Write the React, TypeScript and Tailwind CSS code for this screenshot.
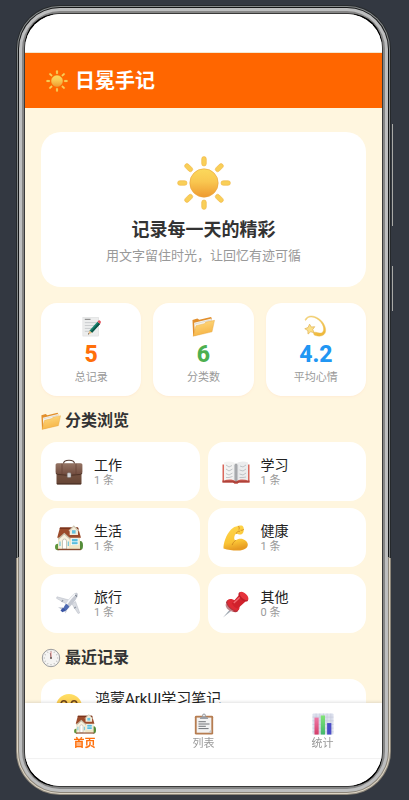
import type { ReactNode } from "react";

type IconProps = { className?: string };

function SunIcon({ className }: IconProps) {
  return (
    <svg viewBox="0 0 54 54" className={className} aria-hidden="true">
      <defs>
        <linearGradient id="sun-core" x1="0" y1="0" x2="0" y2="1">
          <stop offset="0" stopColor="#fbd95c" />
          <stop offset="0.45" stopColor="#f9c750" />
          <stop offset="1" stopColor="#ee9a30" />
        </linearGradient>
      </defs>
      {[0, 45, 90, 135, 180, 225, 270, 315].map((deg) => (
        <rect
          key={deg}
          x="24.7"
          y="0.6"
          width="4.6"
          height="9.4"
          rx="2.3"
          fill="#f9cf58"
          stroke="#f0b545"
          strokeWidth="0.6"
          transform={`rotate(${deg} 27 27)`}
        />
      ))}
      <circle cx="27" cy="27" r="14.2" fill="url(#sun-core)" stroke="#e9a23a" strokeWidth="0.6" />
    </svg>
  );
}

function MemoIcon({ className }: IconProps) {
  return (
    <svg viewBox="0 0 24 24" className={className} aria-hidden="true">
      <rect x="3" y="2.5" width="16.5" height="19.5" fill="#eceded" stroke="#d6d7d8" strokeWidth="0.5" />
      <path d="M5 4.5h6" stroke="#777" strokeWidth="1" />
      <path d="M5 8h12M5 11h12M5 14h9M5 17h6" stroke="#bfc2c4" strokeWidth="0.8" />
      <path d="M18.2 7 21 9.4 12.6 18.6 9.8 16.4Z" fill="#17806c" />
      <path d="M19.6 8.2 21 9.4 12.6 18.6 11.2 17.5Z" fill="#0d5548" />
      <path d="m18.2 7 1.2-1.3c1.1-.6 2.7.8 2.3 2L21 9.4Z" fill="#e0525c" />
      <path d="m9.8 16.4 2.8 2.2-4.2 1.7Z" fill="#e9bd86" />
      <path d="m8.8 19 .9.8-1.4.6Z" fill="#222" />
    </svg>
  );
}

function FolderIcon({ className }: IconProps) {
  return (
    <svg viewBox="0 0 24 24" className={className} aria-hidden="true">
      <defs>
        <linearGradient id="folder-front" x1="0" y1="0" x2="0.3" y2="1">
          <stop offset="0" stopColor="#ffdc83" />
          <stop offset="1" stopColor="#f6b547" />
        </linearGradient>
      </defs>
      <path d="M0.5 5.2 5.6 3.6l2 1.4 12.2-3 .9 1.5L20 17 1.2 22Z" fill="#e28f2c" />
      <path d="M2.2 8 20.4 3.6 21.4 11 3 19Z" fill="#f7f4ec" />
      <path d="m2.6 9.5 18-4.6" stroke="#d2cec6" strokeWidth="0.7" />
      <path d="M4.2 11.2 13 9l1.4-1.6 9.1-1.8-2.6 12L1.2 22.2Z" fill="url(#folder-front)" stroke="#e5a23b" strokeWidth="0.4" />
    </svg>
  );
}

function DizzyIcon({ className }: IconProps) {
  return (
    <svg viewBox="0 0 24 24" className={className} aria-hidden="true">
      <defs>
        <linearGradient id="dizzy-trail" x1="0" y1="0" x2="0.5" y2="1">
          <stop offset="0" stopColor="#f9dc86" />
          <stop offset="1" stopColor="#efb93c" />
        </linearGradient>
      </defs>
      <path
        d="M1.2 4.8C2.5 1.6 6.6.2 11 1.6c6.6 2 11.8 8.6 11.6 14.6-.2 5-4.8 7-10.6 5.2-1.4-.4-2.3-1.4-2-2.4.3-1 1.5-1.3 2.8-.9 4.6 1.5 7.2.7 7.6-2.5.6-4.8-3.6-10.6-9.2-12.8C7.2 1.3 3.6 2 2.3 5.2c-.4.8-1.4.4-1.1-.4Z"
        fill="url(#dizzy-trail)"
        stroke="#e8bd55"
        strokeWidth="0.4"
      />
      <path
        d="m5.8 9.6 1.9 3 3.5-.4-2.1 2.9 1.5 3.4-3.6-1-2.8 2.4-.2-3.600L.8 14.3l3.4-1.2Z"
        fill="#fbe08a"
        stroke="#dfae4c"
        strokeWidth="0.7"
        strokeLinejoin="round"
      />
    </svg>
  );
}

function BriefcaseIcon({ className }: IconProps) {
  return (
    <svg viewBox="0 0 28 28" className={className} aria-hidden="true">
      <defs>
        <linearGradient id="case-top" x1="0" y1="0" x2="0" y2="1">
          <stop offset="0" stopColor="#947363" />
          <stop offset="1" stopColor="#6f4a3c" />
        </linearGradient>
        <linearGradient id="case-body" x1="0" y1="0" x2="0" y2="1">
          <stop offset="0" stopColor="#805c4c" />
          <stop offset="1" stopColor="#664534" />
        </linearGradient>
      </defs>
      <path d="M8.5 5.8C8.5 3 10 2.200 14 2.200s5.5.8 5.5 3.6" fill="none" stroke="#5a4238" strokeWidth="1.1" />
      <rect x="1.5" y="5.5" width="25" height="21" rx="1.2" fill="url(#case-body)" />
      <path d="M.6 7c0-1 .5-1.5 1.4-1.5h24c.9 0 1.4.5 1.4 1.5v7c0 1.5-1 2.3-2.5 2.5L14 17.3 3.1 16.5C1.6 16.3.6 15.5.6 14Z" fill="url(#case-top)" />
      <path d="M1 15c.4 1 1.2 1.4 2.2 1.500L14 17.4l10.800-.9c1-.1 1.800-.5 2.200-1.5" fill="none" stroke="#422a20" strokeWidth="0.8" />
      <path d="M7 5.8v10.5M21 5.8v10.5" stroke="#674539" strokeWidth="0.8" />
      <path d="M2 25.8h24" stroke="#493026" strokeWidth="1" />
      <rect x="12.2" y="14.8" width="3.8" height="4.8" rx="1" fill="#d4d5d8" stroke="#77706d" strokeWidth="0.5" />
    </svg>
  );
}

function BookIcon({ className }: IconProps) {
  return (
    <svg viewBox="0 0 28 28" className={className} aria-hidden="true">
      <path d="M.5 6.500h27v18H17l-1.500 1h-3l-1.500-1H.5Z" fill="#d9685c" />
      <path d="M.5 22.500h27v2H17l-1.500 1h-3l-1.500-1H.5Z" fill="#ae423a" />
      <path d="M2 4.500C6 2.800 11 3.200 14 5.800v17.500c-3-2-8-2.200-12-.8Z" fill="#f3f3f2" />
      <path d="M26 4.500c-4-1.700-9-1.300-12 1.300v17.500c3-2 8-2.200 12-.8Z" fill="#ebeced" />
      <path d="M14 5.800v17.700" stroke="#7c7e81" strokeWidth="1.300" />
      <path d="M12.500 6.500v15.500M15.500 6.500v15.500" stroke="#c4c6c9" strokeWidth="1.200" />
      <path
        d="m4 7 3 2 3-1.500M4 11l3 2 3.500-2M4 15.500l3 1.500 3.500-2M4 19.500l3 0 3.500-1M18 8l3 1 3-2M17.500 12l3.500 1 3-2M17.500 16l3.500 1 3-2M17.500 19.500h3.500l3-.5"
        fill="none"
        stroke="#b4b8bb"
        strokeWidth="0.800"
      />
    </svg>
  );
}

function HouseIcon({ className }: IconProps) {
  return (
    <svg viewBox="0 0 28 28" className={className} aria-hidden="true">
      <ellipse cx="3" cy="23" rx="3" ry="3.2" fill="#5f963d" />
      <ellipse cx="25.3" cy="21.5" rx="2.7" ry="4.5" fill="#548c39" />
      <path d="M3 13h22v12.5H3Z" fill="#efe6c8" />
      <path d="M5 3.5h18l3 10.200H2.200Z" fill="#9b4b2b" />
      <path d="M5 3.500h18l.5 1.500H4.600Z" fill="#7a341d" />
      <path d="M14.700 6.500 18.800 2l4.200 4.500V11h-8.300Z" fill="#f3edda" />
      <path d="M14 7 18.800 2l4.800 5" fill="none" stroke="#d1c9b5" strokeWidth="1.1" />
      <rect x="17" y="6.2" width="3.6" height="3.4" fill="#65c3df" />
      <path d="M4.500 14.500 9.300 10l5 4.500v11H4.500Z" fill="#f7f1de" />
      <path d="M3.200 15.200 9.300 9.600l6 5.600" fill="none" stroke="#c9c2ae" strokeWidth="1.3" />
      <path d="M7.500 25v-8a2 2 0 0 1 4 0v8Z" fill="#fff" stroke="#b2ad9e" strokeWidth="0.7" />
      <path d="M5 17.500v4.500M13.300 17.500v4.500" stroke="#65c3df" strokeWidth="1.1" />
      <rect x="16.5" y="14.7" width="6.5" height="6" fill="#58bddd" stroke="#fff" strokeWidth="0.7" />
      <path d="M16.500 17.700h6.500" stroke="#fff" strokeWidth="0.7" />
      <path d="M2.500 25.500h23.300" stroke="#87482f" strokeWidth="1.4" />
    </svg>
  );
}

function MuscleIcon({ className }: IconProps) {
  return (
    <svg viewBox="0 0 28 28" className={className} aria-hidden="true">
      <defs>
        <linearGradient id="arm" x1="0" y1="0" x2="0.2" y2="1">
          <stop offset="0" stopColor="#ffd64c" />
          <stop offset="0.7" stopColor="#fac536" />
          <stop offset="1" stopColor="#e79b22" />
        </linearGradient>
      </defs>
      <path
        d="M1.500 24.500C1.200 19.500 4 11 9 5.500c2-2.200 4.500-3.200 7-3.600 2.500-.6 4.600-.8 5.200.9.8 1.500.9 4-.1 6-.7 1.500-2.300 2-4 1.600-1.200-.2-2-1-2.700-1-1.400.5-2 2.600-2.200 4.600 0 1.200.5 2.200 1.300 2.500 2-1.600 5-2.200 7.600-1.300 3 .9 4.700 3.100 4.700 5.400 0 3.500-3.600 6-9.600 6-5 .1-10-.5-14.700-2.100Z"
        fill="url(#arm)"
      />
      <path d="M13.500 16.500c-1.700 1.200-2.700 2.600-3.200 4.200M14.400 9.400c.5-1.800 1.900-2.600 3.200-2.200M16.500 2.200c.8 1 .9 2 .6 3M19 6.300c1.200.2 2-.2 2.600-.9" fill="none" stroke="#cf8920" strokeWidth="0.9" strokeLinecap="round" />
    </svg>
  );
}

function PlaneIcon({ className }: IconProps) {
  return (
    <svg viewBox="0 0 28 28" className={className} aria-hidden="true">
      <path d="M14 10 2 6.800 1.500 8.300l10 5.700ZM17 14l6 9.500 1.700-.6L20.500 11.500Z" fill="#d9dce2" stroke="#b4b9c3" strokeWidth="0.5" />
      <path d="m8 17.500-5-.3 3.500 2.300ZM10.500 20 10 23.500l1.800-2.500Z" fill="#bfc4ce" />
      <path d="M21.700 2.800c1.200.6 1.500 2 .6 4-1.800 4-6 9-10.800 13.500-2.300 1.800-4 1.300-3.600-.7C9.700 14.500 16 6 19.300 3.500c1-.8 1.700-1 2.400-.7Z" fill="#c5c9d2" />
      <path d="M20.500 4c-3 1.800-7.500 8-10.300 12" fill="none" stroke="#f6f7f9" strokeWidth="1.6" />
      <path d="M11 13.800c1.300.6 2.500 1.700 3.300 3l-2.800 3.500c-2.300 1.800-4 1.300-3.600-.7.6-1.800 1.700-3.800 3.100-5.800Z" fill="#4f6bb2" />
      <path d="m8 17.500-2.500 3 2 1.800 3-2Z" fill="#3a55a3" />
      <path d="m20.200 5 1.900 1.500" stroke="#56606f" strokeWidth="1" />
      <path d="m8 10-1.300 1.800M21 17l-2 1.300" stroke="#9098a5" strokeWidth="1.2" />
    </svg>
  );
}

function PinIcon({ className }: IconProps) {
  return (
    <svg viewBox="0 0 28 28" className={className} aria-hidden="true">
      <path d="m10 17 2 1.800L1 27.500Z" fill="#a1aab3" />
      <ellipse cx="10.300" cy="16" rx="7.600" ry="4.600" transform="rotate(43 10.300 16)" fill="#b2323b" />
      <ellipse cx="11.500" cy="14.800" rx="7.400" ry="4.200" transform="rotate(43 11.500 14.800)" fill="#de2a34" />
      <path d="M9.800 13.200 17 5l6.800 6.300-8 7.100c-2.300-.3-5-2.600-6-5.200Z" fill="#d0222c" />
      <path d="m11.800 13 6.600-6.200" stroke="#f26a70" strokeWidth="1.400" />
      <ellipse cx="21.300" cy="6.800" rx="6" ry="3.200" transform="rotate(43 21.300 6.800)" fill="#bd1c27" />
      <ellipse cx="22" cy="6" rx="5.500" ry="2.700" transform="rotate(43 22 6)" fill="#e5333c" />
      <path d="M4.200 12.500c1 3.700 3.800 6.800 7.500 8.500l-1.200.6C6.700 21 3.900 18.300 3.600 15Z" fill="#c2868c" />
    </svg>
  );
}

function ClockIcon({ className }: IconProps) {
  return (
    <svg viewBox="0 0 20 20" className={className} aria-hidden="true">
      <circle cx="10" cy="10" r="8.700" fill="#f5f4f2" stroke="#9b9c9e" strokeWidth="1" />
      {[0, 30, 60, 90, 120, 150, 180, 210, 240, 270, 300, 330].map((deg) => (
        <path key={deg} d="M10 2.700v1.200" stroke="#888" strokeWidth="0.6" transform={`rotate(${deg} 10 10)`} />
      ))}
      <path d="M10 10 9.300 5" stroke="#666" strokeWidth="0.8" />
      <path d="M10 11V3.500" stroke="#db5959" strokeWidth="0.7" />
      <circle cx="10" cy="10" r="0.9" fill="#555" />
    </svg>
  );
}

function SmileIcon({ className }: IconProps) {
  return (
    <svg viewBox="0 0 28 28" className={className} aria-hidden="true">
      <defs>
        <linearGradient id="smile-face" x1="0" y1="0" x2="0" y2="1">
          <stop offset="0" stopColor="#ffe065" />
          <stop offset="1" stopColor="#f6a938" />
        </linearGradient>
      </defs>
      <circle cx="14" cy="14" r="13" fill="url(#smile-face)" />
      <circle cx="5.5" cy="16.5" r="3.5" fill="#f28a4c" opacity="0.6" />
      <circle cx="22.5" cy="16.5" r="3.5" fill="#f28a4c" opacity="0.6" />
      <path d="M6 10.500c.8-3.700 5-3.700 5.800 0M16.200 10.500c.8-3.700 5-3.700 5.800 0M8 17.500c2.500 4.500 9.500 4.500 12 0" fill="none" stroke="#6d431a" strokeWidth="1.6" strokeLinecap="round" />
    </svg>
  );
}

function ClipboardIcon({ className }: IconProps) {
  return (
    <svg viewBox="0 0 24 24" className={className} aria-hidden="true">
      <rect x="2" y="3" width="20" height="20.5" rx="1.5" fill="#b67d51" />
      <rect x="4" y="5" width="16" height="16.5" fill="#f2f2f2" />
      <path d="m20 18-3.500 3.500H20Z" fill="#c9c9c9" />
      <path d="M6 9.500h8M6 12h12M6 14.500h8M6 17h11" stroke="#65686c" strokeWidth="1" />
      <path d="M7.500 6.500c0-2 1.300-2.500 3-2.700h3c1.700.2 3 .7 3 2.700Z" fill="#9b9fa5" />
      <circle cx="12" cy="2.7" r="1.6" fill="#eee" stroke="#8f9399" strokeWidth="1" />
    </svg>
  );
}

function ChartIcon({ className }: IconProps) {
  return (
    <svg viewBox="0 0 24 24" className={className} aria-hidden="true">
      <defs>
        <linearGradient id="bar-red" x1="0" y1="0" x2="0" y2="1">
          <stop offset="0" stopColor="#ee79a6" />
          <stop offset="1" stopColor="#d53c68" />
        </linearGradient>
        <linearGradient id="bar-green" x1="0" y1="0" x2="0" y2="1">
          <stop offset="0" stopColor="#82e576" />
          <stop offset="1" stopColor="#42b66c" />
        </linearGradient>
      </defs>
      <rect x="0.5" y="0.5" width="23" height="23" rx="1.2" fill="#dce0ed" />
      <path d="M.5 4.500h23M.5 8.500h23M.5 12.500h23M.5 16.500h23M.5 20.500h23M4.500.5v23M8.500.5v23M12.500.5v23M16.500.5v23M20.500.5v23" stroke="#c0c6d9" strokeWidth="0.6" />
      <rect x="2.7" y="5" width="4.6" height="18.5" fill="url(#bar-red)" />
      <rect x="9.6" y="2.7" width="4.6" height="20.8" fill="url(#bar-green)" />
      <rect x="16.5" y="11" width="4.6" height="12.5" fill="#494bc7" />
    </svg>
  );
}

const stats = [
  { label: "总记录", value: "5", color: "text-[#ff6f0a]", Icon: MemoIcon },
  { label: "分类数", value: "6", color: "text-[#4caf50]", Icon: FolderIcon },
  { label: "平均心情", value: "4.2", color: "text-[#2196f3]", Icon: DizzyIcon },
];

const categories = [
  { name: "工作", count: 1, Icon: BriefcaseIcon },
  { name: "学习", count: 1, Icon: BookIcon },
  { name: "生活", count: 1, Icon: HouseIcon },
  { name: "健康", count: 1, Icon: MuscleIcon },
  { name: "旅行", count: 1, Icon: PlaneIcon },
  { name: "其他", count: 0, Icon: PinIcon },
];

const tabs = [
  { name: "首页", active: true, Icon: HouseIcon },
  { name: "列表", active: false, Icon: ClipboardIcon },
  { name: "统计", active: false, Icon: ChartIcon },
];

function SectionTitle({ icon, children }: { icon: ReactNode; children: ReactNode }) {
  return (
    <h2 className="flex items-center gap-1 pt-[13px] pb-[9px] text-base leading-6 font-bold text-[#333]">
      {icon}
      {children}
    </h2>
  );
}

// Metal rim, from the outer edge inwards. The finish changes below the side seam.
function PhoneFrame({ children }: { children: ReactNode }) {
  return (
    <div className="relative flex grow min-h-0 rounded-[44px] p-px bg-[linear-gradient(#26292c_70%,#8d867a_70%)]">
      <div className="flex grow min-w-0 rounded-[43px] p-px bg-[linear-gradient(#85898a_70%,#ddd5c5_70%)]">
        <div className="flex grow min-w-0 rounded-[42px] p-px bg-[linear-gradient(#151617_70%,#8c8579_70%)]">
          <div className="flex grow min-w-0 rounded-[41px] p-[3px] bg-[#bdbebf]">
            <div className="flex grow min-w-0 rounded-[38px] p-[2px] bg-[#858585]">
              <div className="flex grow min-w-0 rounded-[35px] p-px bg-[#3a3a3a]">
                <div className="flex grow min-w-0 rounded-[31px] bg-black">
                  <div className="flex grow min-w-0 flex-col overflow-hidden rounded-[35px] bg-white">
                    {children}
                  </div>
                </div>
              </div>
            </div>
          </div>
        </div>
      </div>
      <span className="absolute -right-0.5 top-[15%] h-[102px] w-px bg-[#a9a9a6]" />
      <span className="absolute -right-0.5 top-[33%] h-[45px] w-px bg-[#a9a9a6]" />
    </div>
  );
}

export default function App() {
  return (
    <div className="flex h-screen flex-col bg-[#333841] py-[5px] pl-4 pr-[18px] font-['Roboto','Noto_Sans_CJK_SC',sans-serif]">
      <PhoneFrame>
        <div className="h-[39px] shrink-0 border-b border-[#f5e8cf] bg-white" />
        <header className="flex h-[55px] shrink-0 items-center gap-[7px] bg-[#ff6600] px-[21px]">
          <SunIcon className="size-[22px]" />
          <h1 className="text-xl font-bold text-white">日冕手记</h1>
        </header>

        <main className="min-h-0 grow overflow-y-auto bg-[#fff6df] px-4 pt-6 [scrollbar-width:none]">
          <section className="flex flex-col items-center rounded-[20px] bg-white pt-6 pb-[21px]">
            <SunIcon className="size-[54px]" />
            <p className="mt-1.5 text-lg leading-7 font-bold text-[#333]">记录每一天的精彩</p>
            <p className="mt-0.5 text-[13px] leading-5 text-[#999]">用文字留住时光，让回忆有迹可循</p>
          </section>

          <section className="mt-4 grid grid-cols-3 gap-3">
            {stats.map(({ label, value, color, Icon }) => (
              <div key={label} className="flex flex-col items-center rounded-2xl bg-white pt-3 pb-2.5 shadow-xs shadow-orange-100">
                <Icon className="size-[23px]" />
                <p className={`mt-[5px] text-[23px] leading-6 font-extrabold ${color}`}>{value}</p>
                <p className="mt-[3px] text-[11px] leading-4 text-[#999]">{label}</p>
              </div>
            ))}
          </section>

          <SectionTitle icon={<FolderIcon className="size-5" />}>分类浏览</SectionTitle>
          <section className="grid grid-cols-2 gap-x-2 gap-y-[7px]">
            {categories.map(({ name, count, Icon }) => (
              <button key={name} className="flex h-[59px] items-center gap-[11px] rounded-2xl bg-white px-3.5 text-left">
                <Icon className="size-7 shrink-0" />
                <span className="flex flex-col">
                  <span className="text-sm leading-[18px] text-[#222]">{name}</span>
                  <span className="text-[11px] leading-[14px] text-[#999]">{count} 条</span>
                </span>
              </button>
            ))}
          </section>

          <SectionTitle icon={<ClockIcon className="size-5" />}>最近记录</SectionTitle>
          <article className="flex gap-3 rounded-2xl bg-white px-3.5 pt-2.5 pb-8">
            <SmileIcon className="mt-1 size-7 shrink-0" />
            <h3 className="text-[15px] leading-5 text-[#222]">鸿蒙ArkUI学习笔记</h3>
          </article>
        </main>

        <nav className="relative grid h-[55px] shrink-0 grid-cols-3 bg-white shadow-[0_-1px_3px_rgba(0,0,0,0.12)]">
          {tabs.map(({ name, active, Icon }) => (
            <button key={name} className="flex flex-col items-center gap-px pt-2.5">
              <Icon className="size-[22px]" />
              <span
                className={
                  active
                    ? "text-[11px] leading-4 font-bold text-[#ff6f0a]"
                    : "text-[11px] leading-4 text-[#999]"
                }
              >
                {name}
              </span>
            </button>
          ))}
        </nav>
        <div className="h-7 shrink-0 border-t border-[#f7f7f7] bg-white" />
      </PhoneFrame>
    </div>
  );
}
